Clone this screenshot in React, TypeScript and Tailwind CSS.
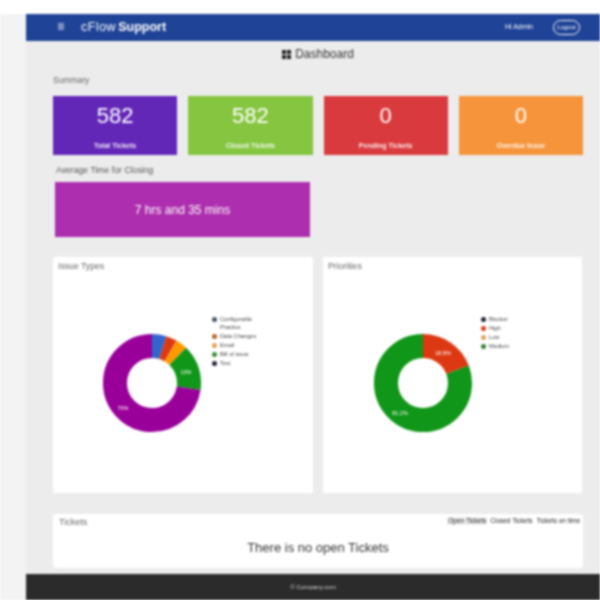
import React from "react";

const font = { fontFamily: '"Liberation Sans", Arial, sans-serif' };

function Donut({ segments, labels }: { segments: { c: string; from: number; to: number }[]; labels: { t: string; x: number; y: number }[] }) {
  const r = 37;
  const circ = 2 * Math.PI * r;
  return (
    <svg width="100" height="100" viewBox="0 0 100 100" className="shrink-0">
      <g transform="rotate(-90 50 50)">
        {segments.map((s, i) => (
          <circle
            key={i}
            cx="50"
            cy="50"
            r={r}
            fill="none"
            stroke={s.c}
            strokeWidth="24"
            strokeDasharray={`${((s.to - s.from) / 360) * circ} ${circ}`}
            strokeDashoffset={-(s.from / 360) * circ}
          />
        ))}
      </g>
      {labels.map((l, i) => (
        <text key={i} x={l.x} y={l.y} fontSize="5.5" fill="#fff" textAnchor="middle" fontFamily="Liberation Sans">
          {l.t}
        </text>
      ))}
    </svg>
  );
}

function Legend({ items }: { items: { c: string; t: string; wrap?: string }[] }) {
  return (
    <div className="flex flex-col gap-[1.5px] text-[5.7px] leading-[7.5px] text-[#444]">
      {items.map((it) => (
        <div key={it.t} className="flex items-start gap-[3px]">
          <span className="mt-[1px] h-[5px] w-[5px] shrink-0 rounded-full" style={{ backgroundColor: it.c }} />
          <span>
            {it.t}
            {it.wrap ? <br /> : null}
            {it.wrap}
          </span>
        </div>
      ))}
    </div>
  );
}

function Stat({ value, label, bg }: { value: string; label: string; bg: string }) {
  return (
    <div className={`flex h-[59px] flex-1 flex-col items-center text-white ${bg}`}>
      <div className="mt-[7px] text-[22px] leading-[26px]">{value}</div>
      <div className="mt-[13px] text-[7px] font-bold leading-[8px] opacity-90">{label}</div>
    </div>
  );
}

export default function App() {
  return (
    <div style={font} className="h-[600px] w-[600px] overflow-hidden bg-white blur-[0.8px]">
      <div className="mt-[14px] flex h-[586px] bg-[#f3f3f3] pl-[26px]">
        <div className="flex min-w-0 flex-1 flex-col bg-[#ececec]">
          <header className="flex h-[27px] shrink-0 items-center bg-[#1f4397] pl-[31px] pr-[20px] text-white">
            <svg width="8" height="7" viewBox="0 0 8 7" className="mb-[2px]">
              <path d="M1 1h6M1 3.5h6M1 6h6" stroke="#fff" strokeWidth="1.2" />
            </svg>
            <div className="ml-[16px] text-[12.5px] leading-none">
              <span className="font-normal tracking-[0.5px]">cFlow</span>
              <span className="ml-[2px] font-bold">Support</span>
            </div>
            <div className="ml-auto text-[7px]">Hi Admin</div>
            <div className="ml-[20px] flex h-[15px] w-[27px] items-center justify-center rounded-full border border-white text-[6px]">
              Logout
            </div>
          </header>

          <div className="flex flex-1 flex-col pl-[27px] pr-[17px]">
            <div className="mt-[6px] flex items-center justify-center gap-[4px] text-[12px] leading-[14px] text-[#333]">
              <svg width="9" height="9" viewBox="0 0 9 9">
                <path d="M0 0h4v4H0zM5 0h4v4H5zM0 5h4v4H0zM5 5h4v4H5z" fill="#222" />
              </svg>
              Dashboard
            </div>

            <div className="mt-[14px] text-[8.5px] leading-[10px] text-[#666]">Summary</div>

            <div className="mt-[11px] flex gap-[11px]">
              <Stat value="582" label="Total Tickets" bg="bg-[#6327b8]" />
              <Stat value="582" label="Closed Tickets" bg="bg-[#85c540]" />
              <Stat value="0" label="Pending Tickets" bg="bg-[#d93a3e]" />
              <Stat value="0" label="Overdue Issue" bg="bg-[#f5943a]" />
            </div>

            <div className="ml-[3px] mt-[10px] text-[8.7px] leading-[10px] text-[#555]">Average Time for Closing</div>
            <div className="ml-[2px] mt-[7px] flex h-[55px] w-[255px] items-center justify-center bg-[#ad2eae] text-[12px] text-white">
              7 hrs and 35 mins
            </div>

            <div className="mt-[20px] flex gap-[10px]">
              <section className="flex h-[236px] w-[260px] flex-col bg-white px-[5px] pt-[4px]">
                <div className="text-[8.7px] leading-[10px] text-[#666]">Issue Types</div>
                <div className="flex pl-[44px]">
                  <div className="mt-[62px]">
                    <Donut
                      segments={[
                        { c: "#3366cc", from: 0, to: 17 },
                        { c: "#dc3912", from: 17, to: 30 },
                        { c: "#ff9900", from: 30, to: 44 },
                        { c: "#109618", from: 44, to: 98 },
                        { c: "#990099", from: 98, to: 360 },
                      ]}
                      labels={[
                        { t: "13%", x: 84, y: 41 },
                        { t: "70%", x: 21, y: 77 },
                      ]}
                    />
                  </div>
                  <div className="ml-[10px] mt-[45px] w-[50px]">
                    <Legend
                      items={[
                        { c: "#44546a", t: "Configurable", wrap: "Practice" },
                        { c: "#b0682a", t: "Data Changes" },
                        { c: "#e0a25a", t: "Email" },
                        { c: "#3b8a3b", t: "Bill of issue" },
                        { c: "#22223a", t: "Test" },
                      ]}
                    />
                  </div>
                </div>
              </section>

              <section className="flex h-[236px] w-[259px] flex-col bg-white px-[5px] pt-[4px]">
                <div className="text-[8.7px] leading-[10px] text-[#666]">Priorities</div>
                <div className="flex pl-[45px]">
                  <div className="mt-[62px]">
                    <Donut
                      segments={[
                        { c: "#dc3912", from: 0, to: 69 },
                        { c: "#109618", from: 69, to: 360 },
                      ]}
                      labels={[
                        { t: "18.8%", x: 70, y: 22 },
                        { t: "81.2%", x: 27, y: 82 },
                      ]}
                    />
                  </div>
                  <div className="ml-[8px] mt-[45px] w-[50px]">
                    <Legend
                      items={[
                        { c: "#22223a", t: "Blocker" },
                        { c: "#dc3912", t: "High" },
                        { c: "#e0a25a", t: "Low" },
                        { c: "#2f7f2f", t: "Medium" },
                      ]}
                    />
                  </div>
                </div>
              </section>
            </div>

            <section className="mt-[21px] h-[54px] w-[530px] rounded-[3px] bg-white px-[6px] pt-[3px]">
              <div className="flex items-start justify-between">
                <div className="text-[9px] leading-[10px] text-[#666]">Tickets</div>
                <div className="mr-[-3px] flex items-center text-[6.5px] leading-[8px] text-[#222]">
                  <span className="bg-[#eeeeee] px-[1px]">Open Tickets</span>
                  <span className="ml-[3px]">Closed Tickets</span>
                  <span className="ml-[4px]">Tickets on time</span>
                </div>
              </div>
              <div className="mt-[12px] text-center text-[13px] leading-[18px] text-[#333]">There is no open Tickets</div>
            </section>
          </div>

          <footer className="flex h-[26px] shrink-0 items-center justify-center bg-[#2b2b2b] text-[6.2px] text-[#ddd]">
            © Company.com
          </footer>
        </div>
      </div>
    </div>
  );
}
